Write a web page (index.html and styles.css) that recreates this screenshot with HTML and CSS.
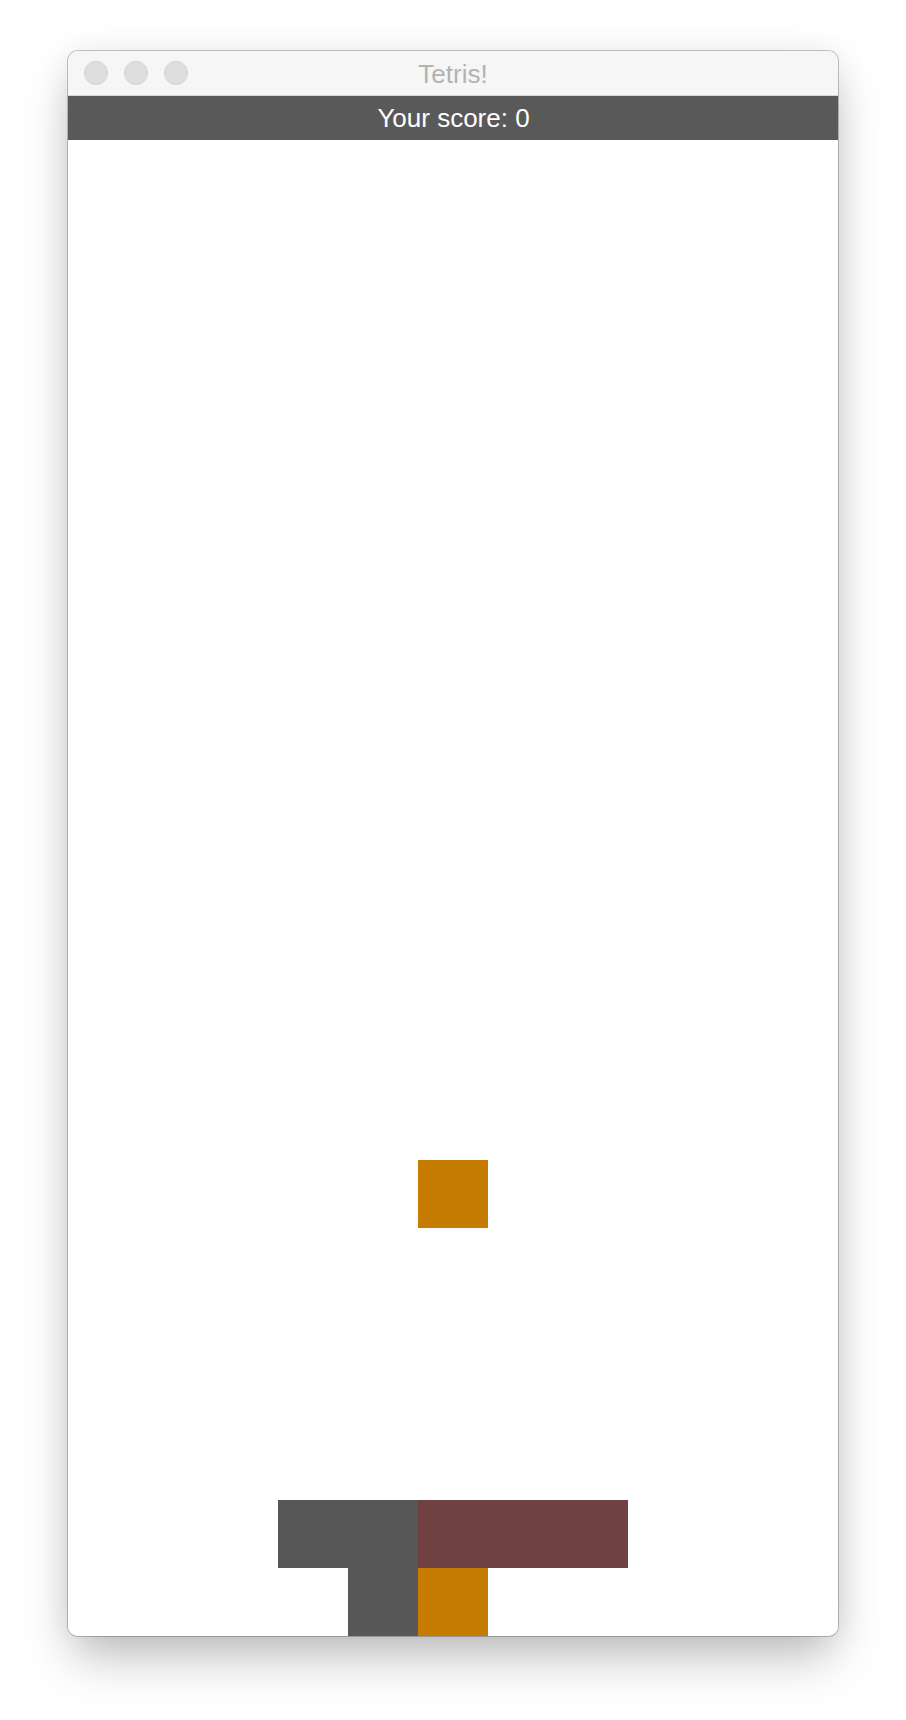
FILE: index.html
```html
<!DOCTYPE html>
<html>
<head>
<meta charset="utf-8">
<title>Tetris!</title>
<link rel="stylesheet" href="styles.css">
</head>
<body>
<div class="window">
  <div class="titlebar">
    <div class="lights">
      <span class="light"></span>
      <span class="light"></span>
      <span class="light"></span>
    </div>
    <div class="title">Tetris!</div>
    <div class="spacer"></div>
  </div>
  <div class="scorebar">Your score: 0</div>
  <div class="board">
    <div class="cell orange" style="grid-row: 16; grid-column: 6;"></div>
    <div class="cell gray" style="grid-row: 21; grid-column: 4 / span 2;"></div>
    <div class="cell maroon" style="grid-row: 21; grid-column: 6 / span 3;"></div>
    <div class="cell gray" style="grid-row: 22; grid-column: 5;"></div>
    <div class="cell orange" style="grid-row: 22; grid-column: 6;"></div>
  </div>
</div>
</body>
</html>
```

FILE: styles.css
```css
* { box-sizing: border-box; }
html, body {
  margin: 0;
  padding: 0;
  background: #ffffff;
}
body {
  min-height: 1720px;
  padding: 51px 0 84px 68px;
  font-family: "Liberation Sans", Arial, sans-serif;
}
.window {
  width: 770px;
  border-radius: 10px;
  overflow: hidden;
  background: #fefefe;
  box-shadow:
    0 0 0 1px rgba(0,0,0,0.22),
    0 26px 50px -6px rgba(0,0,0,0.26),
    0 0 34px rgba(0,0,0,0.07);
}
.titlebar {
  height: 45px;
  background: #f6f6f6;
  border-bottom: 1px solid #d8d8d8;
  display: grid;
  grid-template-columns: 1fr auto 1fr;
  align-items: center;
}
.lights {
  display: flex;
  gap: 16px;
  padding-left: 16px;
  margin-top: -1px;
}
.light {
  width: 24px;
  height: 24px;
  border-radius: 50%;
  background: #dedede;
  border: 1px solid #d2d2d2;
}
.title {
  font-size: 26px;
  color: #b3b3b3;
  line-height: 30px;
  margin-top: 1px;
}
.scorebar {
  height: 44px;
  background: #595959;
  color: #ffffff;
  font-size: 26px;
  line-height: 44px;
  text-align: center;
  padding-left: 1px;
}
.board {
  display: grid;
  grid-template-columns: repeat(11, 70px);
  grid-template-rows: repeat(22, 68px);
  background: #fefefe;
}
.cell.orange { background: #c67c00; }
.cell.gray { background: #575757; }
.cell.maroon { background: #6f4142; }
```
